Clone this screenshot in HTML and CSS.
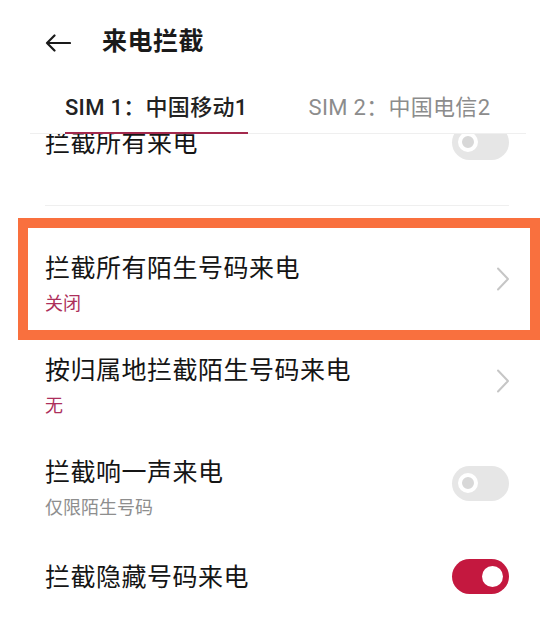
FILE: index.html
```html
<!DOCTYPE html>
<html lang="zh-CN">
<head>
<meta charset="utf-8">
<title>来电拦截</title>
<link rel="stylesheet" href="styles.css">
</head>
<body>
<div class="screen">
  <header class="appbar">
    <div class="titlebar">
      <svg class="back" width="26" height="18" viewBox="0 0 26 18" aria-hidden="true">
        <path d="M25 9H2M9.5 1.5L2 9l7.5 7.5" fill="none" stroke="#1a1a1a" stroke-width="2.2" stroke-linecap="round" stroke-linejoin="round"/>
      </svg>
      <h1 class="title">来电拦截</h1>
    </div>
    <nav class="tabs">
      <span class="tab tab-active">SIM 1：中国移动1</span>
      <span class="tab">SIM 2：中国电信2</span>
    </nav>
  </header>
  <main class="list">
    <div class="item item-single item-first">
      <div class="texts"><div class="main">拦截所有来电</div></div>
      <span class="switch"><span class="knob"></span></span>
    </div>
    <div class="divider"></div>
    <div class="item item-double item-boxed">
      <div class="texts">
        <div class="main">拦截所有陌生号码来电</div>
        <div class="sub sub-accent">关闭</div>
      </div>
      <svg class="chev" width="14" height="24" viewBox="0 0 14 24" aria-hidden="true"><path d="M2 1.5L12 12 2 22.5" fill="none" stroke="#c6c6c6" stroke-width="2" stroke-linecap="round" stroke-linejoin="round"/></svg>
    </div>
    <div class="item item-double">
      <div class="texts">
        <div class="main">按归属地拦截陌生号码来电</div>
        <div class="sub sub-accent">无</div>
      </div>
      <svg class="chev" width="14" height="24" viewBox="0 0 14 24" aria-hidden="true"><path d="M2 1.5L12 12 2 22.5" fill="none" stroke="#c6c6c6" stroke-width="2" stroke-linecap="round" stroke-linejoin="round"/></svg>
    </div>
    <div class="item item-double">
      <div class="texts">
        <div class="main">拦截响一声来电</div>
        <div class="sub">仅限陌生号码</div>
      </div>
      <span class="switch"><span class="knob"></span></span>
    </div>
    <div class="item item-single">
      <div class="texts"><div class="main">拦截隐藏号码来电</div></div>
      <span class="switch switch-on"><span class="knob"></span></span>
    </div>
  </main>
</div>
</body>
</html>
```
FILE: styles.css
```css
* { box-sizing: border-box; }
html, body { margin: 0; padding: 0; background: #fff; }
body {
  font-family: "Roboto", "Noto Sans CJK SC", "Noto Sans", sans-serif;
  color: #151515;
}
.screen {
  width: 548px;
  height: 620px;
  overflow: hidden;
  display: flex;
  flex-direction: column;
}
.appbar {
  position: relative;
  z-index: 2;
  background: #fff;
  border-bottom: 1px solid #efefef;
  margin: 0 22px 0 30px;
  flex: none;
}
.titlebar {
  height: 84px;
  display: flex;
  align-items: center;
  padding-left: 15px;
}
.back { display: block; margin-top: 2px; }
.title {
  margin: 0 0 0 31px;
  font-size: 25px;
  line-height: 30px;
  font-weight: 600;
  color: #1a1a1a;
  letter-spacing: 0.5px;
}
.tabs {
  display: flex;
  gap: 61px;
  padding-left: 35px;
  padding-top: 9px;
}
.tab {
  font-size: 22px;
  line-height: 30px;
  letter-spacing: 0.3px;
  padding-bottom: 9px;
  border-bottom: 2px solid transparent;
  color: #8c8c8c;
  margin-bottom: -1px;
}
.tab-active {
  color: #222;
  font-weight: 500;
  border-bottom-color: #a3294d;
}
.list {
  flex: 1;
  overflow: hidden;
  position: relative;
  z-index: 1;
}
.item {
  display: flex;
  justify-content: space-between;
  align-items: center;
  padding: 0 39px 0 45px;
}
.item-first { margin-top: -34px; }
.item-single { height: 84px; }
.item-single .texts { padding-top: 4px; }
.item-double { height: 102px; align-items: center; }
.item-double .texts {
  align-self: flex-start;
  padding-top: 26px;
}
.main {
  font-size: 25px;
  line-height: 30px;
  letter-spacing: 0.5px;
  color: #151515;
  white-space: nowrap;
}
.sub {
  font-size: 18px;
  line-height: 24px;
  margin-top: 8px;
  color: #8e8e8e;
}
.sub-accent { color: #ad2f5b; }
.divider {
  height: 1px;
  background: #efefef;
  margin: 21px 39px 22px 45px;
}
.item-boxed {
  margin: 0 18px 0 28px;
  padding: 0 21px 0 17px;
  outline: 10px solid #f9703e;
}
.chev { display: block; margin-right: -1px; }
.switch {
  position: relative;
  flex: none;
  width: 57px;
  height: 35px;
  border-radius: 18px;
  background: #e6e6e6;
}
.knob {
  position: absolute;
  top: 7.5px;
  left: 6px;
  width: 20px;
  height: 20px;
  border-radius: 50%;
  background: #d8d8d8;
  border: 4.5px solid #fff;
}
.switch-on { background: #c4183f; }
.switch-on .knob {
  left: auto;
  right: 6px;
  top: 7px;
  width: 21px;
  height: 21px;
  background: #fff;
  border: none;
}
```
